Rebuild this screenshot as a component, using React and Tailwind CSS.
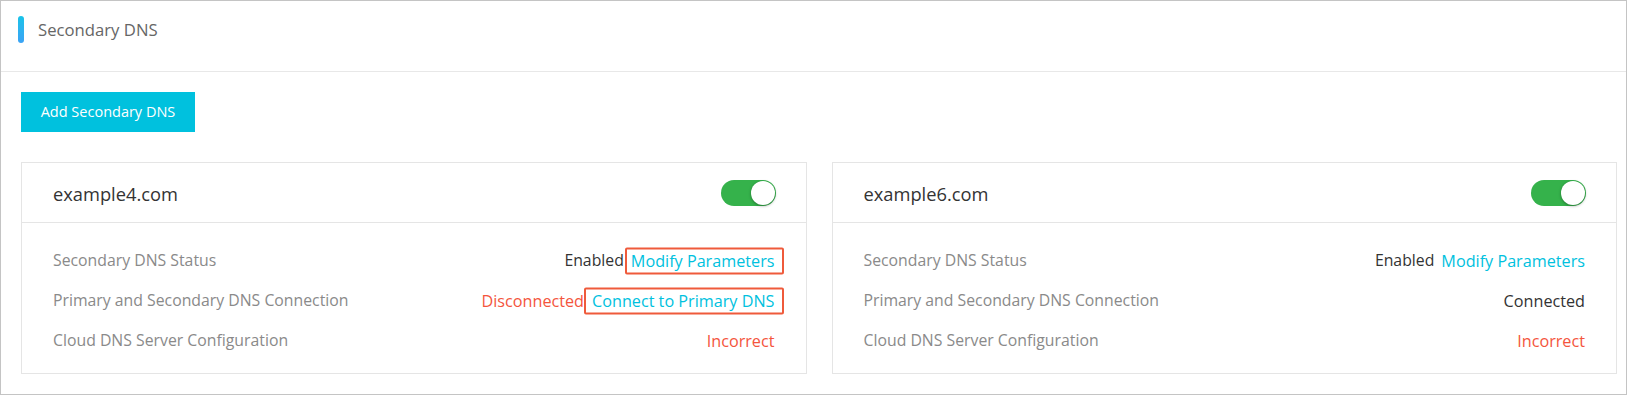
import React from "react";

const font = { fontFamily: '"Open Sans", "Noto Sans", Arial, sans-serif' };

function Toggle() {
  return (
    <div className="relative h-[26px] w-[55px] rounded-full bg-[#35b24b]">
      <div className="absolute right-[1px] top-[1px] h-[24px] w-[24px] rounded-full bg-white shadow-[0_1px_3px_rgba(0,0,0,0.35)]" />
    </div>
  );
}

function Boxed({ children, left, right }) {
  return (
    <span className="relative inline-block">
      {children}
      <span
        className={`pointer-events-none absolute top-1/2 h-[27px] -translate-y-1/2 rounded-[2px] border-[2.5px] border-[#ef5a3b] ${left} ${right}`}
      />
    </span>
  );
}

function Row({ label, children }) {
  return (
    <div className="flex h-[40px] items-center justify-between">
      <span className="text-[15.8px] text-[#8a8a8a]">{label}</span>
      <span className="flex items-center text-[16.2px]">{children}</span>
    </div>
  );
}

function Card({ domain, boxed, connected }) {
  const modify = <span className="text-[#00c1de]">Modify Parameters</span>;
  const connect = <span className="text-[#00c1de]">Connect to Primary DNS</span>;
  return (
    <div className="flex-1 border border-[#e5e5e5] bg-white">
      <div className="flex h-[60px] items-center justify-between border-b border-[#e5e5e5] pl-[31px] pr-[30px]">
        <span className="pt-[2px] text-[18.3px] text-[#333333]">{domain}</span>
        <Toggle />
      </div>
      <div className="pl-[31px] pr-[31px] pt-[18px] pb-[12px]">
        <Row label="Secondary DNS Status">
          <span className="text-[15.8px] text-[#333333]">Enabled</span>
          <span className="ml-[7px]">
            {boxed ? (
              <Boxed left="left-[-6px]" right="right-[-9px]">{modify}</Boxed>
            ) : (
              modify
            )}
          </span>
        </Row>
        <Row label="Primary and Secondary DNS Connection">
          {connected ? (
            <span className="text-[#333333]">Connected</span>
          ) : (
            <>
              <span className="text-[#f4553d]">Disconnected</span>
              <span className="ml-[8px]">
                <Boxed left="left-[-8px]" right="right-[-9px]">{connect}</Boxed>
              </span>
            </>
          )}
        </Row>
        <Row label="Cloud DNS Server Configuration">
          <span className="text-[#f4553d]">Incorrect</span>
        </Row>
      </div>
    </div>
  );
}

export default function App() {
  return (
    <div style={font} className="h-[395px] w-[1627px] border border-[#c4c4c4] bg-white">
      <div className="flex h-[71px] items-start border-b border-[#e8e8e8] pl-[17px] pt-[15px]">
        <div className="flex h-[27px] items-center gap-[14px]">
          <div className="h-[27px] w-[6px] rounded-full bg-gradient-to-b from-[#16c3e8] to-[#3aa2f5]" />
          <span className="pt-[1px] text-[16.7px] text-[#666666]">Secondary DNS</span>
        </div>
      </div>
      <div className="pl-[20px] pr-[9px] pt-[20px]">
        <button className="flex h-[40px] w-[174px] items-center justify-center bg-[#00c1de] text-[14.5px] text-white">
          Add Secondary DNS
        </button>
        <div className="mt-[30px] flex gap-[25px]">
          <Card domain="example4.com" boxed />
          <Card domain="example6.com" connected />
        </div>
      </div>
    </div>
  );
}
